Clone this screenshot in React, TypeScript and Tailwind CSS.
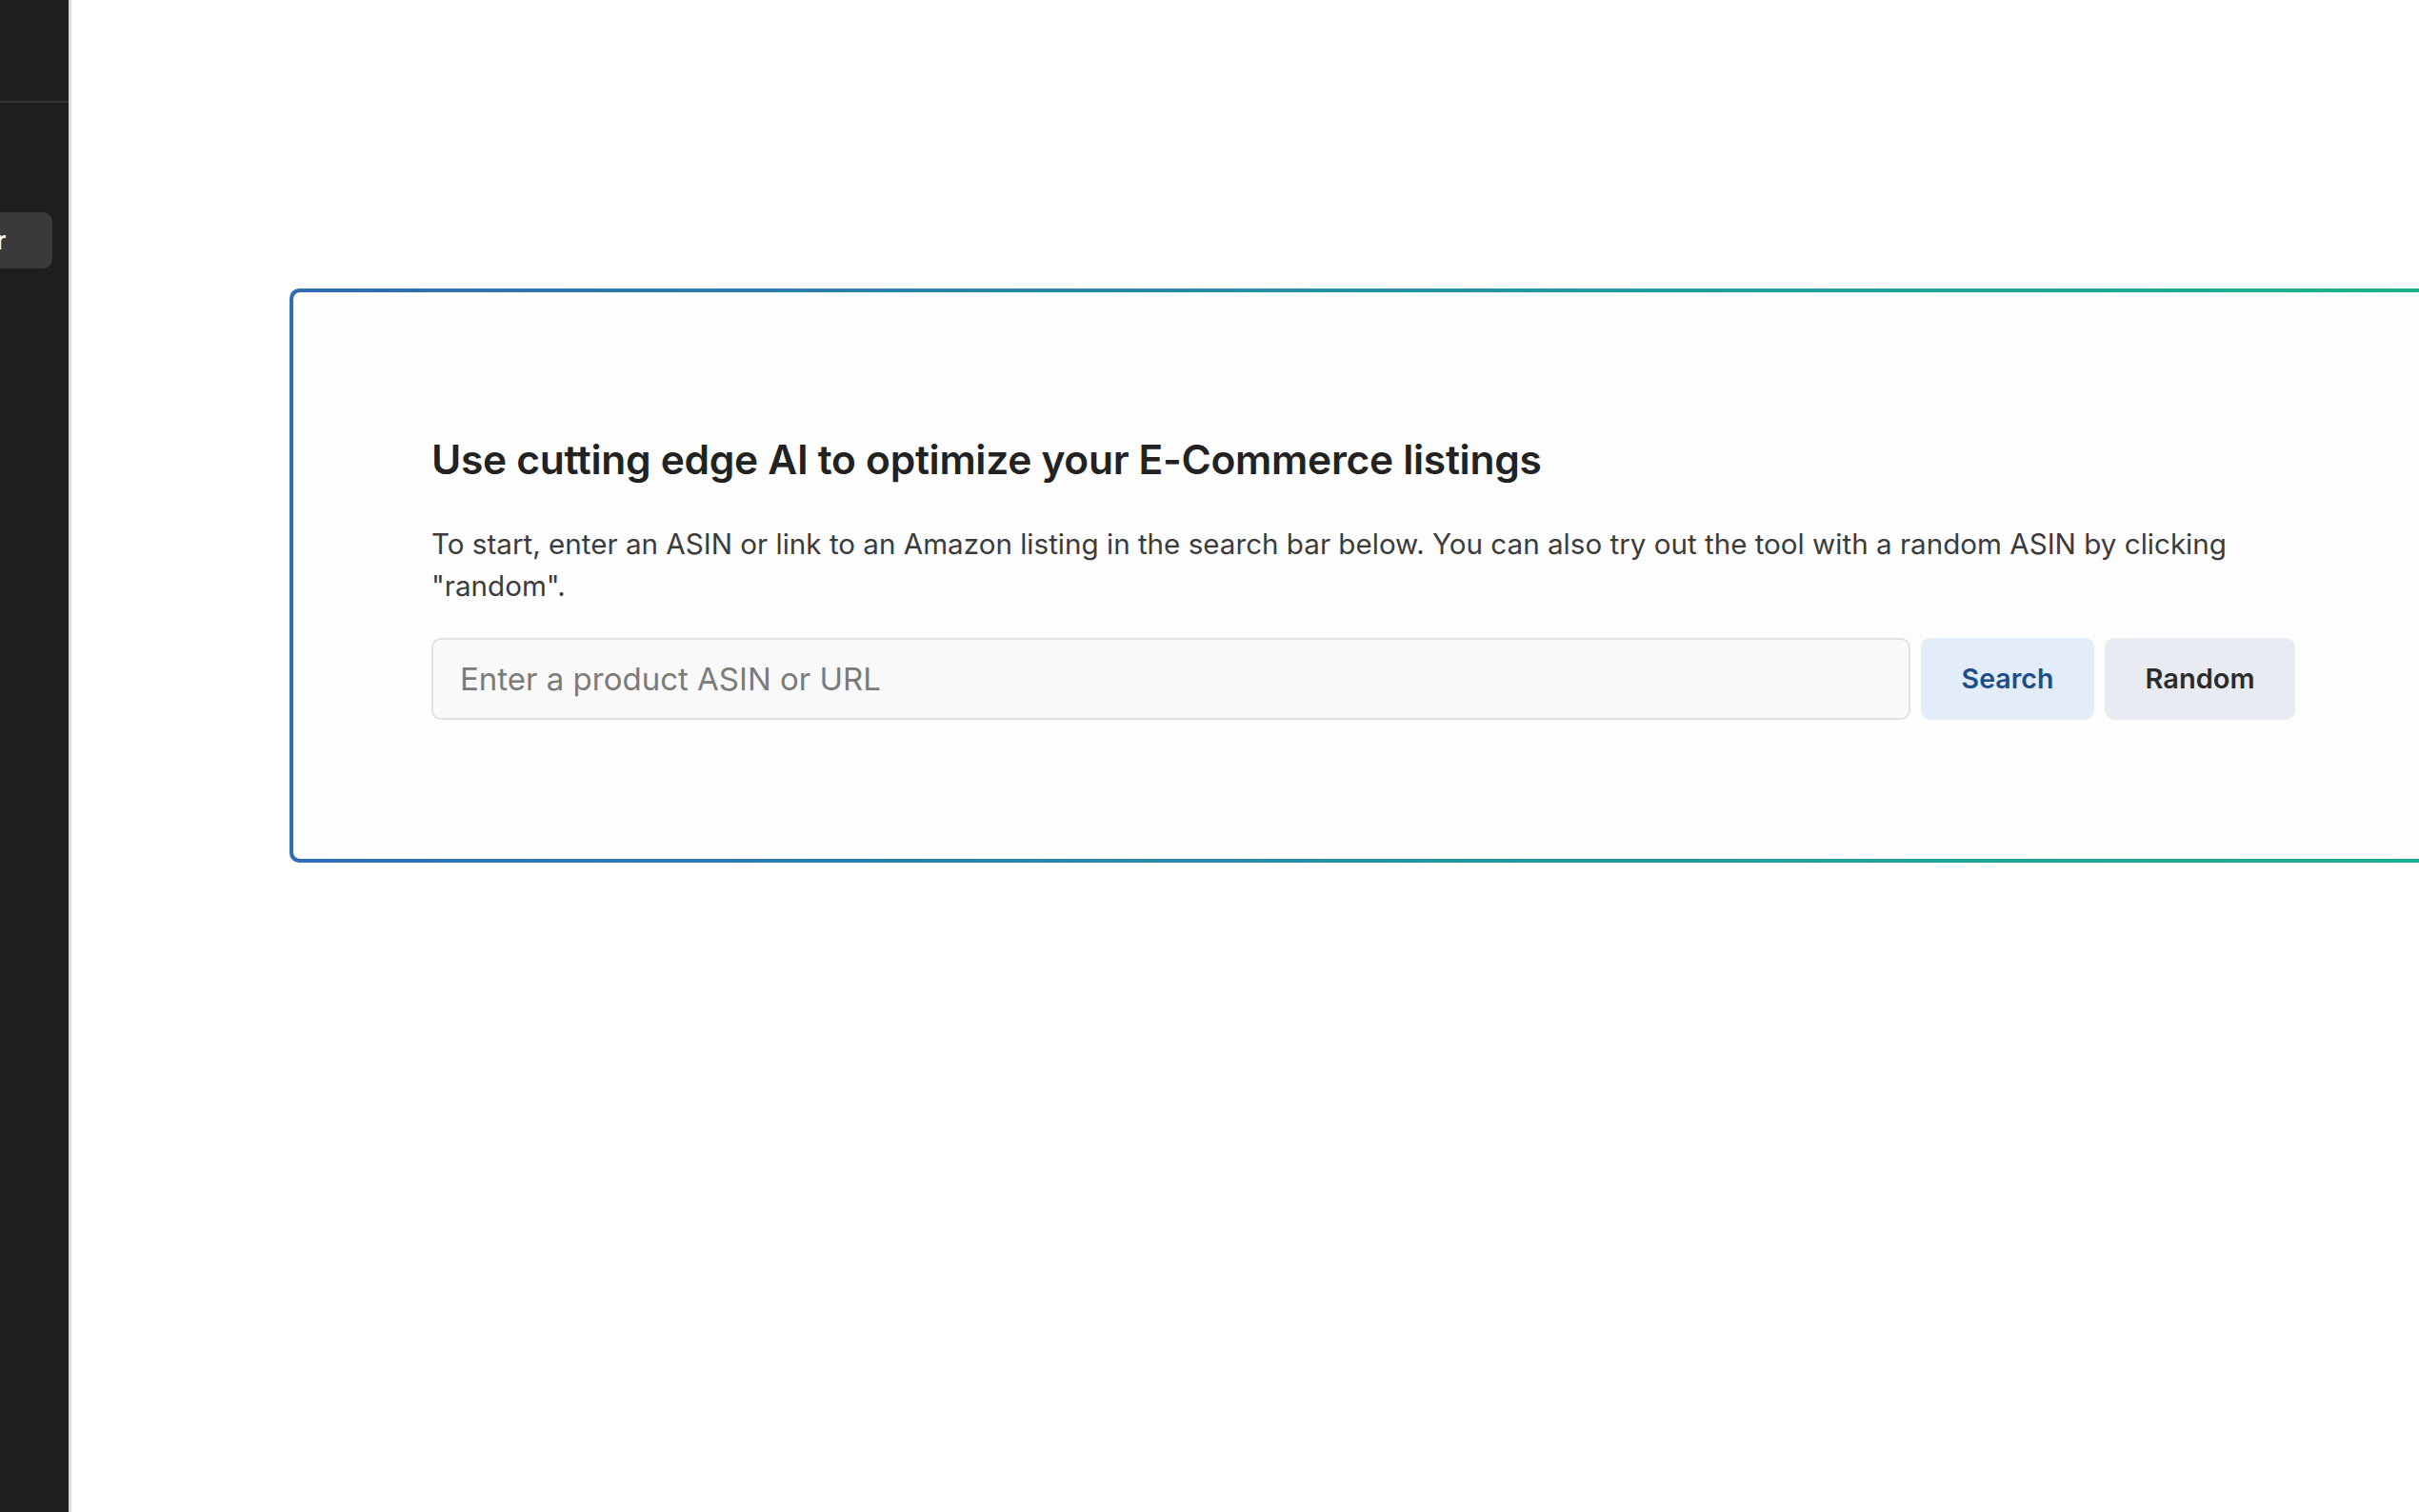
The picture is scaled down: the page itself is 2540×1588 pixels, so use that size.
import React from "react";

export default function App() {
  return (
    <div className="flex h-[1588px] w-[2540px] overflow-hidden bg-white" style={{ fontFamily: "Inter, 'Noto Sans', sans-serif" }}>
      <aside className="flex h-full w-[75px] shrink-0 flex-col overflow-hidden border-r-[3px] border-[#dcdcdc] bg-[#1e1e1e]">
        <div className="h-[108px] shrink-0 border-b-2 border-[#333335]" />
        <div className="mt-[115px] -ml-[20px] flex h-[59px] w-[75px] shrink-0 items-center rounded-[10px] bg-[#3a3a3d] pl-[16px] text-[26px] font-semibold text-white">
          r
        </div>
      </aside>
      <main className="flex-1 overflow-hidden">
        <div className="ml-[229px] mt-[303px] w-[2340px] rounded-[10px] bg-gradient-to-r from-[#2f6db5] to-[#1db48a] p-[4px]">
          <div className="rounded-[7px] bg-[#fdfdfd] pl-[145px] pt-[152px] pb-[146px]">
            <div className="w-[1958px]">
              <h1 className="text-[42.5px] font-semibold leading-[48px] tracking-[-0.3px] text-[#222222]">
                Use cutting edge AI to optimize your E-Commerce listings
              </h1>
              <p className="mt-[42px] text-[29.6px] leading-[44px] text-[#3b3b3b]">
                To start, enter an ASIN or link to an Amazon listing in the search bar below. You can also try out the tool with a random ASIN by clicking "random".
              </p>
              <div className="mt-[33px] flex h-[86px] gap-[11px]">
                <input
                  className="h-full w-[1553px] rounded-[10px] border-2 border-[#e1e1e1] bg-[#f9f9f9] px-[28px] text-[33px] text-[#333] outline-none placeholder:text-[#7b7b7b]"
                  placeholder="Enter a product ASIN or URL"
                />
                <button className="h-full w-[182px] rounded-[10px] bg-[#e2edf9] text-[28.5px] font-semibold text-[#1d4e88]">
                  Search
                </button>
                <button className="h-full w-[200px] rounded-[10px] bg-[#e8ecf2] text-[29px] font-semibold text-[#2b2b2b]">
                  Random
                </button>
              </div>
            </div>
          </div>
        </div>
      </main>
    </div>
  );
}
